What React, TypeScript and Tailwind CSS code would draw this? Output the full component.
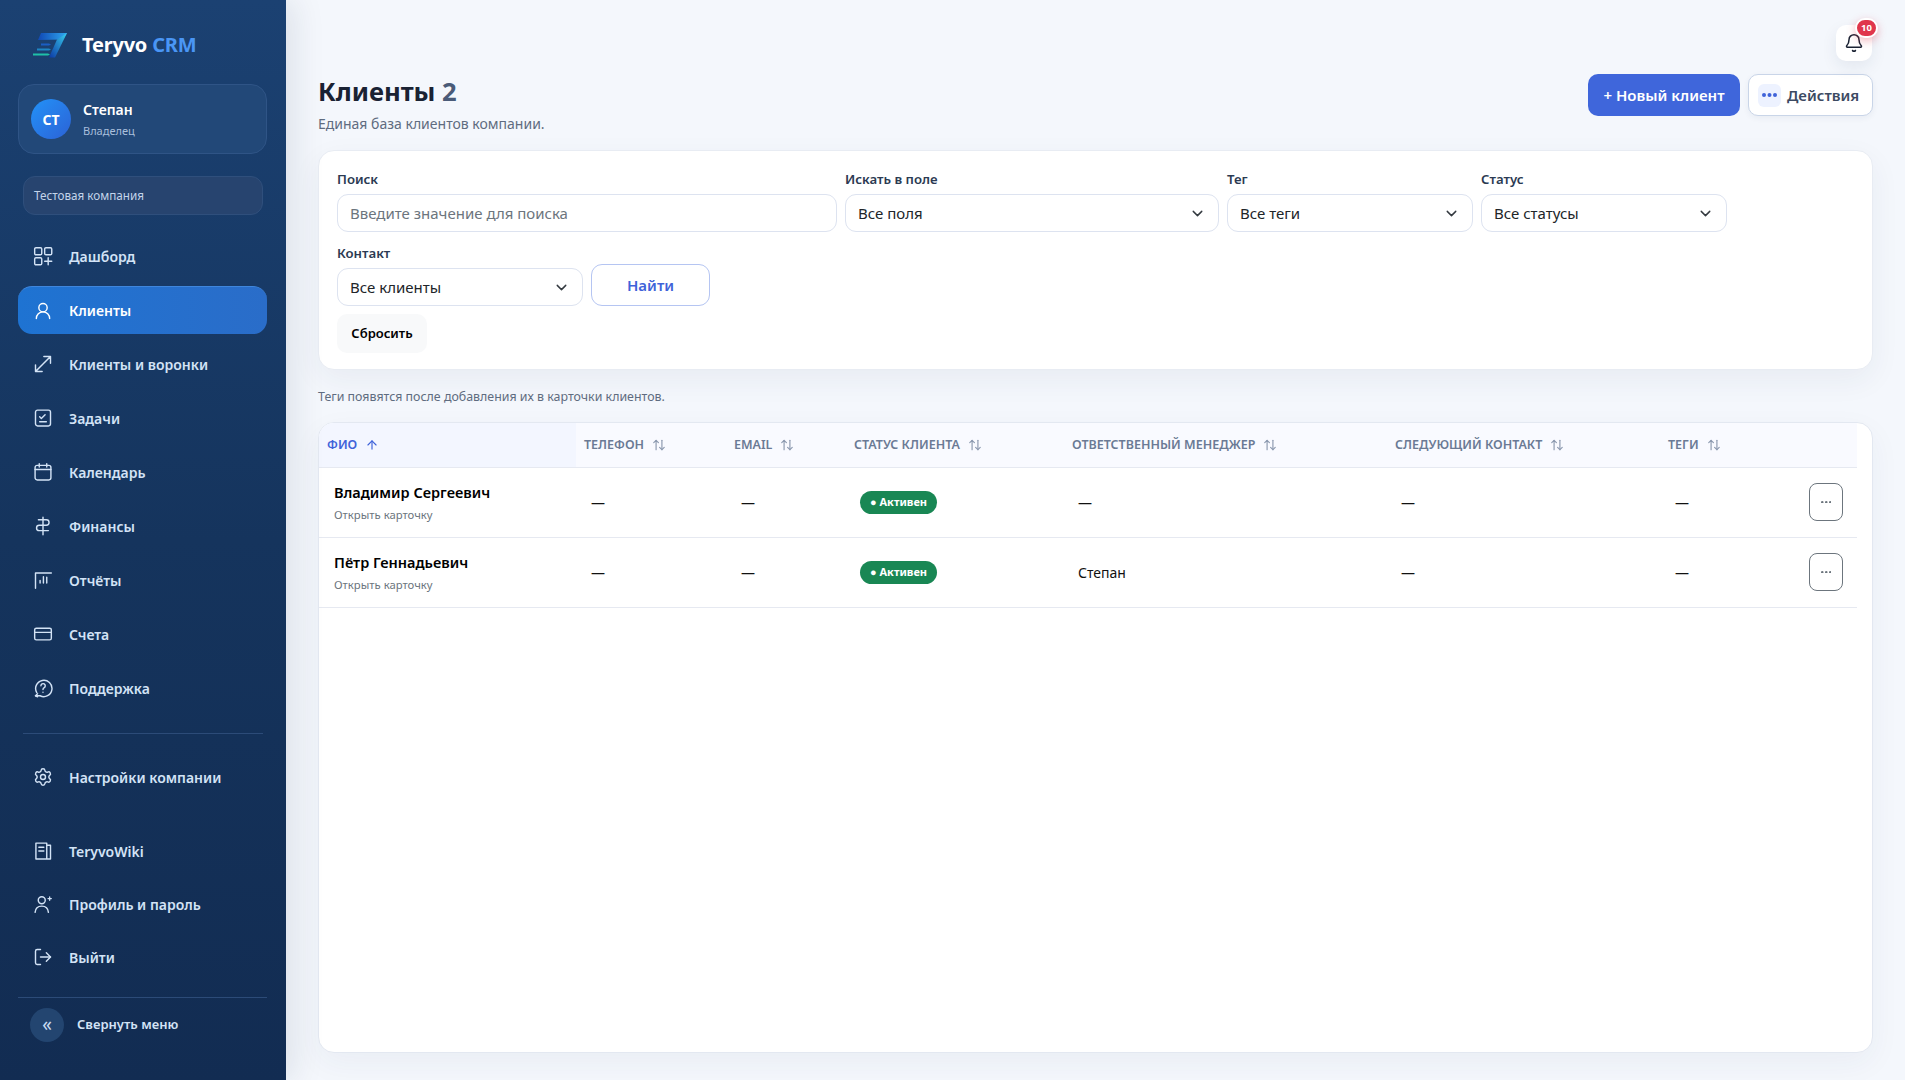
import type { ReactNode } from "react";
import { ArrowUp, ArrowUpDown, Bell, ChevronDown, CreditCard, LogOut, Settings, UserRound } from "lucide-react";

const iconProps = {
  width: 20,
  height: 20,
  viewBox: "0 0 24 24",
  fill: "none",
  stroke: "currentColor",
  strokeWidth: 1.7,
  strokeLinecap: "round" as const,
  strokeLinejoin: "round" as const,
};

function DashboardIcon() {
  return (
    <svg {...iconProps}>
      <rect x="2" y="2" width="8.500" height="8.500" rx="1.500" />
      <rect x="14" y="2" width="8.500" height="8.500" rx="1.500" />
      <rect x="2" y="14" width="8.500" height="8.500" rx="1.500" />
      <path d="M18.200 14v8.500M14 18.200h8.500" />
    </svg>
  );
}

function FunnelsIcon() {
  return (
    <svg {...iconProps}>
      <path d="M3 21 21 3M13 3h8v8M3 13v8h8" />
    </svg>
  );
}

function TasksIcon() {
  return (
    <svg {...iconProps}>
      <rect x="3" y="2.500" width="18" height="19" rx="2.500" />
      <path d="m8 10.500 2 2 4.500-4.500M8 16.500h8" />
    </svg>
  );
}

function CalendarIcon() {
  return (
    <svg {...iconProps}>
      <rect x="2.500" y="4" width="19" height="17.500" rx="2.500" />
      <path d="M2.500 9h19M7.500 2v4M16.500 2v4" />
    </svg>
  );
}

function SignIcon() {
  return (
    <svg {...iconProps}>
      <path d="M12 1.500v21M6.500 4.500H16a3.250 3.250 0 0 1 0 6.500H7.500a3.250 3.250 0 0 0 0 6.500h11" />
    </svg>
  );
}

function ReportsIcon() {
  return (
    <svg {...iconProps}>
      <path d="M3 22V3.500h19M8.500 15.500v-3M12.500 15.500V8M16.500 15.500V8.500" />
    </svg>
  );
}

function SupportIcon() {
  return (
    <svg {...iconProps}>
      <path d="M4.500 17.500A9.800 9.800 0 1 1 8.500 21.300H3" />
      <path d="m5.500 19-2.500 2.300 2.500 1.200" />
      <path d="M9.500 9.300a2.600 2.600 0 1 1 4 2.300c-1 .6-1.500 1.200-1.500 2.300M12 17v.1" />
    </svg>
  );
}

function WikiIcon() {
  return (
    <svg {...iconProps}>
      <path d="M3.500 2.500h13v19h-13zM16.500 5H21v16.500h-4.500M7 7.500h6M7 12h6" />
    </svg>
  );
}

function ProfileIcon() {
  return (
    <svg {...iconProps}>
      <circle cx="10.500" cy="7.500" r="4.200" />
      <path d="M2.500 22c.4-5 3.700-7.500 8-7.500s7.600 2.500 8 7.500" />
      <path d="M20 3.500v4M18 5.500h4" strokeWidth="1.500" />
    </svg>
  );
}

function Logo() {
  return (
    <svg width="36" height="28" viewBox="0 0 36 28">
      <defs>
        <linearGradient id="logoTop" x1="0" y1="0" x2="1" y2="0">
          <stop offset="0" stopColor="#1048b4" />
          <stop offset="1" stopColor="#2fa8f0" />
        </linearGradient>
        <linearGradient id="logoLeg" x1="1" y1="0" x2="0" y2="1">
          <stop offset="0" stopColor="#38d0ee" />
          <stop offset="1" stopColor="#0c38a4" />
        </linearGradient>
      </defs>
      <path d="M10 2h26l-4 6.500L7 9z" fill="url(#logoTop)" />
      <path d="M36 2 24 26.500h-6L26 8.500z" fill="url(#logoLeg)" />
      <path d="M10 12.500h8l2 1-2 1h-8z" fill="#1b5ec4" />
      <path d="M6 17.500h12l2 1-2 1H6z" fill="#1e86c4" />
      <path d="M2 22.500h15l2 1-2 1H2z" fill="#1fc0a8" />
    </svg>
  );
}

function Dots({ size, gap, color }: { size: number; gap: number; color: string }) {
  const r = size / 2;
  const width = size * 3 + gap * 2;
  return (
    <svg width={width} height={size} fill={color}>
      <circle cx={r} cy={r} r={r} />
      <circle cx={r + size + gap} cy={r} r={r} />
      <circle cx={r + (size + gap) * 2} cy={r} r={r} />
    </svg>
  );
}

function NavItem({ icon, label, active }: { icon: ReactNode; label: string; active?: boolean }) {
  return (
    <div
      className={
        active
          ? "flex h-[48px] items-center gap-[16px] rounded-[14px] border-t border-[#3f86dc] bg-gradient-to-r from-[#1e73d2] to-[#2a6dc9] pl-[15px] text-[14px] font-semibold text-white"
          : "flex h-[48px] items-center gap-[16px] pl-[15px] text-[14px] font-semibold text-[#d3e3f6]"
      }
    >
      <span className="flex w-[20px] justify-center">{icon}</span>
      {label}
    </div>
  );
}

function Sidebar() {
  return (
    <aside className="relative z-10 flex h-screen w-[286px] shrink-0 flex-col bg-gradient-to-b from-[#1b4172] via-[#15345d] to-[#122c52] shadow-[8px_0_30px_rgba(15,35,70,0.1)]">
      <div className="flex h-[84px] items-center gap-[15px] pl-[31px] pt-[6px]">
        <Logo />
        <div className="text-[20px] font-bold tracking-[-0.2px] text-white">
          Teryvo <span className="text-[#4a96f5]">CRM</span>
        </div>
      </div>
      <div className="ml-[18px] mr-[19px] flex h-[70px] items-center gap-[12px] rounded-[16px] border border-[#2f5486] bg-[#224878] pl-[12px]">
        <div className="flex size-[40px] items-center justify-center rounded-full bg-gradient-to-br from-[#2192f8] to-[#2b62d6] text-[14px] font-bold text-white">
          СТ
        </div>
        <div>
          <div className="text-[14px] font-semibold leading-[20px] text-white">Степан</div>
          <div className="mt-[3px] text-[11px] leading-[16px] text-[#a9bfdc]">Владелец</div>
        </div>
      </div>
      <div className="mx-[23px] mt-[22px] flex h-[39px] items-center rounded-[12px] border border-[#2f4f7c] bg-[#27446f] pl-[10px] text-[11.700px] text-[#c3d4ea]">
        Тестовая компания
      </div>
      <div className="ml-[18px] mr-[19px] mt-[17px] flex flex-col gap-[6px]">
        <NavItem icon={<DashboardIcon />} label="Дашборд" />
        <NavItem icon={<UserRound size={20} strokeWidth={1.7} />} label="Клиенты" active />
        <NavItem icon={<FunnelsIcon />} label="Клиенты и воронки" />
        <NavItem icon={<TasksIcon />} label="Задачи" />
        <NavItem icon={<CalendarIcon />} label="Календарь" />
        <NavItem icon={<SignIcon />} label="Финансы" />
        <NavItem icon={<ReportsIcon />} label="Отчёты" />
        <NavItem icon={<CreditCard size={20} strokeWidth={1.7} />} label="Счета" />
        <NavItem icon={<SupportIcon />} label="Поддержка" />
      </div>
      <div className="mx-[23px] mt-[21px] border-t border-[#2c4b78]" />
      <div className="ml-[18px] mr-[19px] mt-[19px]">
        <NavItem icon={<Settings size={20} strokeWidth={1.7} />} label="Настройки компании" />
      </div>
      <div className="ml-[18px] mr-[19px] mt-[26px] flex flex-col gap-[5px]">
        <NavItem icon={<WikiIcon />} label="TeryvoWiki" />
        <NavItem icon={<ProfileIcon />} label="Профиль и пароль" />
        <NavItem icon={<LogOut size={20} strokeWidth={1.7} />} label="Выйти" />
      </div>
      <div className="ml-[18px] mr-[19px] mt-[16px] border-t border-[#2c4b78]" />
      <div className="mt-[10px] flex items-center gap-[13px] pl-[30px]">
        <div className="flex size-[34px] items-center justify-center rounded-full bg-[#234570] pb-[2px] text-[19px] text-[#c9dbf2]">
          «
        </div>
        <div className="text-[13px] font-semibold text-[#d3e3f6]">Свернуть меню</div>
      </div>
    </aside>
  );
}

function Field({ label, value, width }: { label: string; value: string; width: string }) {
  return (
    <div className={width}>
      <div className="mb-[6px] text-[13.200px] font-semibold leading-[18px] text-[#2b3a52]">{label}</div>
      <div className="flex h-[38px] items-center justify-between rounded-[11px] border border-[#dde3f0] bg-white pl-[12px] pr-[12px] text-[15px] text-[#212529]">
        {value}
        <ChevronDown size={17} strokeWidth={2} className="text-[#343a40]" />
      </div>
    </div>
  );
}

function SortHead({ label, active }: { label: string; active?: boolean }) {
  return (
    <th className={active ? "bg-[#f3f6ff] px-2 pb-[4px] text-left" : "px-2 pb-[4px] text-left"}>
      <span className={active ? "inline-flex items-center gap-[8px] text-[12.500px] font-semibold text-[#3f63d9]" : "inline-flex items-center gap-[8px] text-[12.500px] font-semibold text-[#6b7a95]"}>
        {label}
        {active ? <ArrowUp size={14} strokeWidth={2} /> : <ArrowUpDown size={14} strokeWidth={2} className="text-[#8d9ab0]" />}
      </span>
    </th>
  );
}

const clients = [
  { name: "Владимир Сергеевич", manager: "—" },
  { name: "Пётр Геннадьевич", manager: "Степан" },
];

function ClientsTable() {
  return (
    <div className="mt-[16px] h-[631px] overflow-hidden rounded-[16px] border border-[#e3e8f1] bg-white shadow-[0_10px_30px_rgba(30,50,90,0.05)]">
      <table className="w-[1538px] table-fixed border-collapse">
        <colgroup>
          <col className="w-[257px]" />
          <col className="w-[150px]" />
          <col className="w-[120px]" />
          <col className="w-[218px]" />
          <col className="w-[323px]" />
          <col className="w-[273px]" />
          <col className="w-[197px]" />
        </colgroup>
        <thead>
          <tr className="h-[44px] border-b border-[#e6e9f1] bg-[#f9faff]">
            <SortHead label="ФИО" active />
            <SortHead label="ТЕЛЕФОН" />
            <SortHead label="EMAIL" />
            <SortHead label="СТАТУС КЛИЕНТА" />
            <SortHead label="ОТВЕТСТВЕННЫЙ МЕНЕДЖЕР" />
            <SortHead label="СЛЕДУЮЩИЙ КОНТАКТ" />
            <SortHead label="ТЕГИ" />
          </tr>
        </thead>
        <tbody className="text-[14px] text-[#111]">
          {clients.map((client) => (
            <tr key={client.name} className="h-[70px] border-b border-[#e6e9f1]">
              <td className="pl-[15px]">
                <div className="text-[14.500px] font-semibold leading-[20px] text-black">{client.name}</div>
                <div className="mt-[5px] text-[11.300px] leading-[16px] text-[#6c757d]">Открыть карточку</div>
              </td>
              <td className="pl-[15px]">—</td>
              <td className="pl-[15px]">—</td>
              <td className="pl-[14px]">
                <span className="inline-flex h-[23px] items-center rounded-full bg-[#198754] px-[10px] text-[11px] font-bold text-white">
                  ● Активен
                </span>
              </td>
              <td className="pl-[14px]">{client.manager}</td>
              <td className="pl-[14px]">—</td>
              <td className="pl-[15px]">
                <div className="flex items-center justify-between pr-[14px]">
                  —
                  <button className="flex h-[38px] w-[34px] items-center justify-center rounded-[8px] border border-[#6c757d]">
                    <Dots size={2.500} gap={1.500} color="#6c757d" />
                  </button>
                </div>
              </td>
            </tr>
          ))}
        </tbody>
      </table>
    </div>
  );
}

export default function App() {
  return (
    <div className="flex h-screen overflow-hidden bg-[#f4f7fc] font-['Noto_Sans',sans-serif]">
      <Sidebar />
      <main className="min-w-0 flex-1 pl-[32px] pr-[32px] pt-[25px]">
        <div className="flex justify-end pr-[1px]">
          <div className="relative flex size-[36px] items-center justify-center rounded-[10px] bg-white text-[#1a2233] shadow-[0_6px_16px_rgba(30,50,90,0.08)]">
            <Bell size={20} strokeWidth={1.800} />
            <span className="absolute -right-[6px] -top-[7px] flex h-[20px] w-[23px] items-center justify-center rounded-full border-2 border-white bg-[#e0364c] text-[9.500px] font-bold text-white shadow-[0_3px_8px_rgba(224,54,76,0.35)]">
              10
            </span>
          </div>
        </div>
        <div className="flex justify-between">
          <div className="pt-[12px]">
            <h1 className="text-[25.600px] font-bold leading-[38px] text-[#1a2233]">
              Клиенты <span className="text-[#4a5b78]">2</span>
            </h1>
            <p className="mt-[3px] text-[14px] leading-[20px] text-[#5f6c80]">Единая база клиентов компании.</p>
          </div>
          <div className="mt-[13px] flex h-[42px] gap-[8px]">
            <button className="w-[152px] rounded-[10px] bg-[#3f66db] text-[15px] font-semibold text-white">+ Новый клиент</button>
            <button className="flex w-[125px] items-center gap-[6px] rounded-[10px] border border-[#c9d5e8] bg-white pl-[9px] text-[15px] font-semibold text-[#3c4a62] shadow-[0_2px_6px_rgba(30,50,90,0.06)]">
              <span className="flex size-[23px] items-center justify-center rounded-[6px] bg-[#edf2ff]">
                <Dots size={4} gap={1.500} color="#3f63d9" />
              </span>
              Действия
            </button>
          </div>
        </div>
        <section className="mt-[16px] h-[220px] rounded-[16px] border border-[#e8ecf3] bg-white pl-[18px] pr-[18px] pt-[19px] shadow-[0_10px_30px_rgba(30,50,90,0.06)]">
          <div className="flex gap-[8px]">
            <div className="w-[500px]">
              <div className="mb-[6px] text-[13.200px] font-semibold leading-[18px] text-[#2b3a52]">Поиск</div>
              <input
                placeholder="Введите значение для поиска"
                className="h-[38px] w-full rounded-[11px] border border-[#dde3f0] bg-white px-[12px] text-[15px] outline-none placeholder:text-[#6c757d]"
              />
            </div>
            <Field label="Искать в поле" value="Все поля" width="w-[374px]" />
            <Field label="Тег" value="Все теги" width="w-[246px]" />
            <Field label="Статус" value="Все статусы" width="w-[246px]" />
          </div>
          <div className="mt-[12px] flex items-end gap-[8px]">
            <Field label="Контакт" value="Все клиенты" width="w-[246px]" />
            <button className="h-[42px] w-[119px] rounded-[11px] border border-[#b5c5f2] bg-white text-[15px] font-semibold text-[#3f63d9]">Найти</button>
          </div>
          <button className="mt-[8px] h-[39px] w-[90px] rounded-[10px] bg-[#f8f9fa] text-[13px] font-semibold text-black">Сбросить</button>
        </section>
        <p className="mt-[18px] text-[12.400px] leading-[18px] text-[#5f6c80]">Теги появятся после добавления их в карточки клиентов.</p>
        <ClientsTable />
      </main>
    </div>
  );
}
